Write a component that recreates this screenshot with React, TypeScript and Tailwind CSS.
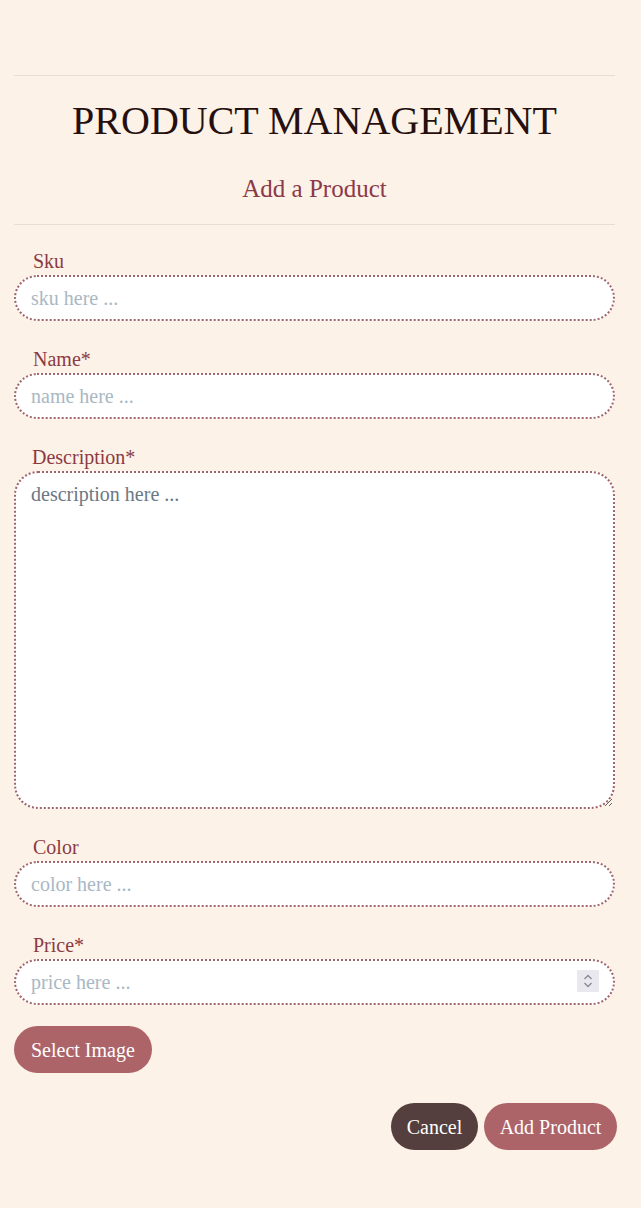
const Field = ({
  label,
  placeholder,
  spinner,
  first,
}: {
  label: string;
  placeholder: string;
  spinner?: boolean;
  first?: boolean;
}) => {
  return (
    <div className={first ? "mt-[24px] flex flex-col" : "mt-[26px] flex flex-col"}>
      <label className="pl-[19px] pt-[2px] text-[20px] leading-[21px] text-[#8b3a44] mb-[3px]">{label}</label>
      <div className="relative">
        <input
          type="text"
          placeholder={placeholder}
          className="w-full h-[46px] rounded-[24px] border-2 border-dotted border-[#a0646c] bg-white pl-[15px] pr-10 font-['Liberation_Serif',serif] text-[20px] text-[#4b5563] placeholder:text-[#a9b8c3] outline-none"
        />
        {spinner && (
          <div className="absolute right-[16px] top-[11px] flex h-[22px] w-[22px] flex-col items-center justify-center bg-[#e9e8ee]">
            <svg width="10" height="16" viewBox="0 0 10 16" fill="none" stroke="#8c8a99" strokeWidth="1.4">
              <path d="M1.5 6 L5 2.5 L8.5 6" />
              <path d="M1.5 10 L5 13.5 L8.5 10" />
            </svg>
          </div>
        )}
      </div>
    </div>
  );
};

export default function App() {
  return (
    <div className="min-h-[1208px] bg-[#fdf2e7] font-['Liberation_Serif',serif]">
      <div className="w-[601px] ml-[14px] pt-[75px] pb-10">
        <hr className="border-0 border-t border-[#e8ddd4]" />
        <h1 className="mt-[22px] text-center text-[40px] leading-[46px] text-[#25100f]">PRODUCT MANAGEMENT</h1>
        <h2 className="mt-[31px] text-center text-[25px] leading-[28px] text-[#8b3a48]">Add a Product</h2>
        <hr className="mt-[21px] border-0 border-t border-[#e8ddd4]" />

        <div className="flex flex-col">
          <Field label="Sku" placeholder="sku here ..." first />
          <Field label="Name*" placeholder="name here ..." />
          <div className="mt-[26px] flex flex-col">
            <label className="pl-[18px] pt-[2px] text-[20px] leading-[21px] text-[#8b3a44] mb-[3px]">Description*</label>
            <textarea
              defaultValue="description here ..."
              className="w-full h-[338px] rounded-[24px] border-2 border-dotted border-[#a0646c] bg-white px-[15px] py-[10px] font-['Liberation_Serif',serif] text-[20px] leading-[23px] text-[#6b7884] outline-none"
            />
          </div>
          <Field label="Color" placeholder="color here ..." />
          <Field label="Price*" placeholder="price here ..." spinner />
        </div>

        <div className="mt-[21px]">
          <button className="h-[47px] rounded-full bg-[#ad6469] px-[17px] font-['Liberation_Serif',serif] text-[20px] text-white">Select Image</button>
        </div>

        <div className="mt-[30px] flex justify-end gap-[6px] -mr-[2px]">
          <button className="h-[47px] w-[87px] rounded-full bg-[#553e3e] font-['Liberation_Serif',serif] text-[20px] text-white">Cancel</button>
          <button className="h-[47px] w-[133px] rounded-full bg-[#ad6469] font-['Liberation_Serif',serif] text-[20px] text-white">Add Product</button>
        </div>
      </div>
    </div>
  );
}
